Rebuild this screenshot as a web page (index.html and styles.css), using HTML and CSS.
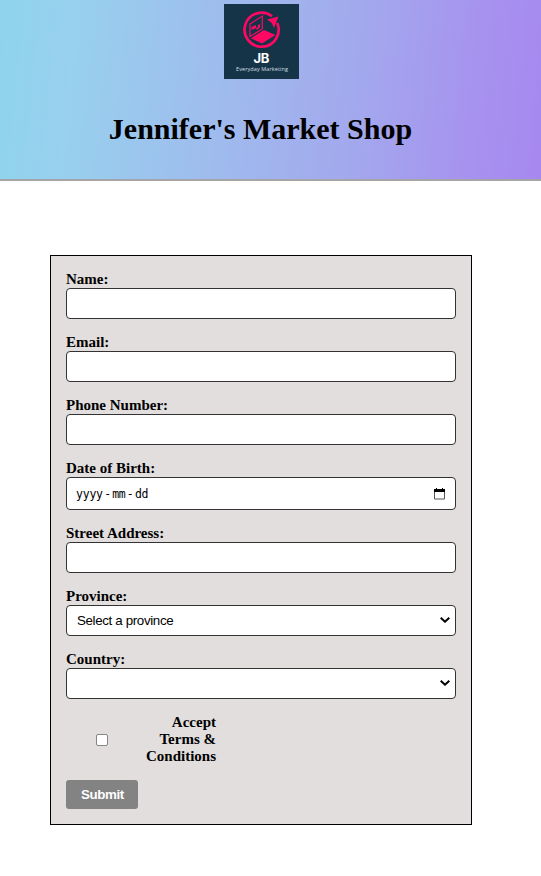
FILE: index.html
```html
<!DOCTYPE html>
<html lang="en">
<head>
<meta charset="utf-8">
<title>Jennifer's Market Shop</title>
<link rel="stylesheet" href="styles.css">
</head>
<body>
<header class="banner">
  <svg class="logo" viewBox="0 0 75 75" width="75" height="75" role="img" aria-label="JB Everyday Marketing">
    <rect width="75" height="75" fill="#153448"/>
    <path d="M48 12.3A17 17 0 1 0 53.2 19" fill="none" stroke="#ff0864" stroke-width="2.7"/>
    <path d="M26 20 38.3 12V25L26 32.5Z" fill="none" stroke="#ff0864" stroke-width="1.2"/>
    <path d="M27.5 23 32 21v3l2-1v-2l2-1v3l-3 3-1-2-4.5 2Z" fill="#ff0864"/>
    <path d="M27 34.2 40 26 51.5 31 38 39.6Z" fill="#ff0864"/>
    <path d="M43 15.5 54.5 12.5 50 24 47.8 19Z" fill="#ff0864"/>
    <text class="logo-name" x="37.3" y="58.5" text-anchor="middle">JB</text>
    <text class="logo-tag" x="12" y="67.3" textLength="52">Everyday Marketing</text>
  </svg>
  <h1 class="title">Jennifer's Market Shop</h1>
</header>
<form class="form">
  <div class="field"><label for="name">Name:</label><input class="control" id="name" type="text"></div>
  <div class="field"><label for="email">Email:</label><input class="control" id="email" type="email"></div>
  <div class="field"><label for="phone">Phone Number:</label><input class="control" id="phone" type="tel"></div>
  <div class="field">
    <label>Date of Birth:</label>
    <div class="control date">
      <span class="date-hint"><span>yyyy</span><span>-</span><span>mm</span><span>-</span><span>dd</span></span>
      <svg width="11" height="12" viewBox="0 0 11 12"><path d="M.5 2.5h10v8.5H.5z" fill="none" stroke="#555"/><path d="M0 1h2V0h1v1h5V0h1v1h2v3H0z"/></svg>
    </div>
  </div>
  <div class="field"><label for="street">Street Address:</label><input class="control" id="street" type="text"></div>
  <div class="field">
    <label for="province">Province:</label>
    <div class="select">
      <select class="control" id="province"><option>Select a province</option></select>
      <svg class="chevron" width="10" height="6" viewBox="0 0 10 6"><path d="M.7 .8 5 4.7 9.3 .8" fill="none" stroke="#000" stroke-width="2"/></svg>
    </div>
  </div>
  <div class="field">
    <label for="country">Country:</label>
    <div class="select">
      <select class="control" id="country"><option></option></select>
      <svg class="chevron" width="10" height="6" viewBox="0 0 10 6"><path d="M.7 .8 5 4.7 9.3 .8" fill="none" stroke="#000" stroke-width="2"/></svg>
    </div>
  </div>
  <div class="terms">
    <input class="check" id="terms" type="checkbox">
    <label for="terms">Accept Terms &amp; Conditions</label>
  </div>
  <button class="submit" type="button">Submit</button>
</form>
</body>
</html>
```
FILE: styles.css
```css
* { box-sizing: border-box; }

body {
  margin: 0;
  background: #fff;
  color: #000;
  font-family: "Liberation Serif", "Times New Roman", serif;
}

.banner {
  display: flex;
  flex-direction: column;
  align-items: center;
  height: 181px;
  padding: 4px 20px 0 0;
  border-bottom: 2px solid #a5a5a8;
  background: linear-gradient(96deg, #8ed4ec 0%, #98d0ee 14%, #9fbaed 43%, #a3a7ed 67%, #a693ef 86%, #a788ee 100%);
}

.logo { display: block; margin-left: 2px; }

.logo-name { fill: #fff; font: bold 13px Inter, sans-serif; letter-spacing: -0.4px; }

.logo-tag { fill: #d3dde2; font: 5.5px "Open Sans", sans-serif; }

.title {
  margin: 32px 0 0;
  font-size: 30px;
  line-height: 35px;
  white-space: nowrap;
}

.form {
  width: 422px;
  height: 570px;
  margin: 74px 0 0 50px;
  padding: 15px;
  border: 1px solid #000;
  background: #e2dedd;
}

.field { margin-bottom: 15px; }

label {
  display: block;
  font-size: 15px;
  font-weight: bold;
  line-height: 17px;
}

.control {
  display: block;
  width: 390px;
  height: 31px;
  margin: 0;
  padding: 0 10px;
  border: 1px solid #333;
  border-radius: 4px;
  background: #fff;
  color: #000;
  font: 13.333px "Liberation Sans", Arial, sans-serif;
  letter-spacing: -0.35px;
}

.date {
  display: flex;
  align-items: center;
  justify-content: space-between;
  height: 33px;
  padding: 0 10px 0 9px;
}

.date-hint {
  display: flex;
  gap: 1.3px;
  font: 11.5px "DejaVu Sans Mono", monospace;
  letter-spacing: -0.22px;
}

.select { display: grid; align-items: center; }

.select > * { grid-area: 1 / 1; }

.select select { appearance: none; }

.chevron { justify-self: end; margin: 0 6px 1px 0; pointer-events: none; }

.terms {
  display: flex;
  align-items: center;
  width: 150px;
  height: 51px;
  margin-bottom: 15px;
}

.check {
  appearance: none;
  width: 12px;
  height: 12px;
  margin: 0 0 0 30px;
  border: 1px solid #858585;
  border-radius: 2px;
  background: #fff;
}

.terms label { width: 75px; margin-left: auto; text-align: right; }

.submit {
  display: block;
  width: 72px;
  height: 29px;
  padding: 0 0 0 1px;
  border: 0;
  border-radius: 3px;
  background: #838383;
  color: #fff;
  font: bold 13.333px "Liberation Sans", Arial, sans-serif;
  letter-spacing: -0.4px;
}
```
